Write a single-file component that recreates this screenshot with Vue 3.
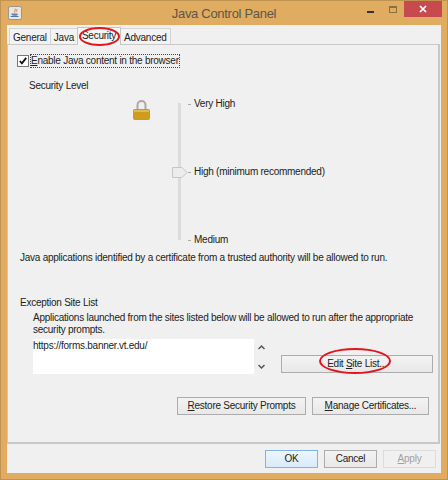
<template>
  <div class="window">
    <header class="titlebar">
      <svg class="app-icon" width="14" height="14" viewBox="0 0 16 16">
        <rect x="0.5" y="0.5" width="15" height="15" rx="2" fill="#e9e6e2" stroke="#8d8a86" />
        <path d="M8 3c1.500 1.500-1.500 2.500 0 4.500M10 3.500c.8 1-1 1.700 0 3" fill="none" stroke="#d9622b" stroke-width="1" />
        <path d="M4 8.500h7v1.500c0 1.500-6 1.500-7 0z" fill="#5b82b0" />
        <path d="M3 12h9" stroke="#4a76a8" stroke-width="1.200" />
      </svg>
      <span class="title">Java Control Panel</span>
      <div class="controls">
        <span class="minimize"></span>
        <span class="maximize"></span>
        <span class="close">
          <svg width="8" height="8" viewBox="0 0 8 8"><path d="M1 1l6 6M7 1l-6 6" stroke="#fff" stroke-width="1.700" /></svg>
        </span>
      </div>
    </header>

    <main class="client">
      <nav class="tabs">
        <span v-for="tab in tabs" :key="tab" class="tab" :class="{ active: tab === 'Security' }">{{ tab }}</span>
      </nav>

      <section class="panel">
        <label class="enable">
          <span class="checkbox">
            <svg width="10" height="10" viewBox="0 0 11 11"><path d="M2 5.500l2.300 2.500L9 2" fill="none" stroke="#111" stroke-width="2" /></svg>
          </span>
          <span class="focus-box"><u>E</u>nable Java content in the browser</span>
        </label>

        <div class="level-title">Security Level</div>

        <div class="level">
          <svg class="lock" width="17" height="20" viewBox="0 0 17 20">
            <path d="M4.500 10V5a4 4 0 0 1 8 0V10" fill="none" stroke="#a9a9a5" stroke-width="2" />
            <rect x="0.500" y="9.500" width="16" height="10" rx="1" fill="#cf9d1c" stroke="#b8975a" />
            <rect x="1" y="10" width="15" height="2" fill="#e0b957" />
          </svg>
          <div class="slider">
            <span class="track"></span>
            <svg class="thumb" width="16" height="11" viewBox="0 0 16 11">
              <path d="M.5 .5H10L15 5.500 10 10.500H.5z" fill="#ececec" stroke="#c6c6c6" />
            </svg>
          </div>
          <ul class="ticks">
            <li v-for="level in levels" :key="level"><span class="dash"></span>{{ level }}</li>
          </ul>
        </div>

        <p class="trusted">Java applications identified by a certificate from a trusted authority will be allowed to run.</p>

        <div class="exception-title">Exception Site List</div>
        <p class="exception-text">Applications launched from the sites listed below will be allowed to run after the appropriate security prompts.</p>

        <div class="site-row">
          <div class="site-list">https://forms.banner.vt.edu/</div>
          <div class="scroller">
            <svg width="7" height="6" viewBox="0 0 7 6"><path d="M.5 5L3.500 2 6.500 5" fill="none" stroke="#555" stroke-width="1.500" /></svg>
            <svg width="7" height="6" viewBox="0 0 7 6"><path d="M.5 1L3.500 4 6.500 1" fill="none" stroke="#555" stroke-width="1.500" /></svg>
          </div>
          <button class="btn edit">Edit <u>S</u>ite List...</button>
        </div>

        <div class="prompt-row">
          <button class="btn restore"><u>R</u>estore Security Prompts</button>
          <button class="btn manage"><u>M</u>anage Certificates...</button>
        </div>
      </section>

      <footer class="actions">
        <button class="btn action ok">OK</button>
        <button class="btn action">Cancel</button>
        <button class="btn action disabled"><u>A</u>pply</button>
      </footer>
    </main>

    <span class="ring ring-tab"></span>
    <span class="ring ring-edit"></span>
  </div>
</template>

<script setup>
const tabs = ['General', 'Java', 'Security', 'Advanced']
const levels = ['Very High', 'High (minimum recommended)', 'Medium']
</script>

<style>
html, body {
  margin: 0;
  background: #dcab61;
}
</style>

<style scoped>
.window {
  position: relative;
  width: 448px;
  height: 480px;
  box-sizing: border-box;
  display: flex;
  flex-direction: column;
  background: #dfac62;
  border: 1px solid #c09450;
  font-family: "Liberation Sans", Arial, sans-serif;
  font-size: 10px;
  letter-spacing: -0.25px;
  line-height: 14px;
  color: #222;
  overflow: hidden;
}

.titlebar {
  position: relative;
  height: 24px;
  flex: none;
  display: flex;
  align-items: center;
  justify-content: center;
}

.app-icon {
  position: absolute;
  left: 7px;
  top: 5px;
}

.title {
  font-size: 13px;
  letter-spacing: -0.3px;
  color: #5d5546;
  margin-top: 2px;
}

.controls {
  position: absolute;
  right: 5px;
  top: 0;
  display: flex;
  align-items: flex-start;
}

.minimize {
  width: 7px;
  height: 2px;
  background: #333;
  margin: 10px 15px 0 0;
}

.maximize {
  width: 6px;
  height: 4px;
  border: 1px solid #8a6f3f;
  border-top-width: 2px;
  margin: 5px 7px 0 0;
}

.close {
  width: 38px;
  height: 16px;
  background: #c74a4e;
  display: flex;
  align-items: center;
  justify-content: center;
}

.client {
  flex: none;
  margin: 0 6px;
  height: 448px;
  background: #f0f0f0;
  display: flex;
  flex-direction: column;
}

.tabs {
  display: flex;
  align-items: flex-end;
  height: 19px;
  padding-left: 2px;
  flex: none;
}

.tab {
  height: 16px;
  padding: 0 3px;
  line-height: 17px;
  border: 1px solid #d4d4d4;
  border-bottom: none;
  margin-right: -1px;
  background: #f3f3f3;
  box-sizing: border-box;
}

.tab.active {
  height: 18px;
  line-height: 15px;
  padding: 0 4px;
  background: #f6f6f6;
  border-color: #c4c4c4;
  position: relative;
  margin-bottom: -1px;
}

.panel {
  height: 400px;
  flex: none;
  box-sizing: border-box;
  border: 1px solid #c8c8c8;
  border-width: 1px 2px 2px 1px;
  width: 433px;
  padding: 9px 9px 0 9px;
  background: #f0f0f0;
}

.enable {
  display: flex;
  align-items: center;
  height: 14px;
}

.checkbox {
  width: 10px;
  height: 10px;
  border: 1px solid #777;
  background: #fff;
  display: flex;
  margin-right: 1px;
}

.focus-box {
  border: 1px dotted #444;
  line-height: 12px;
}

.level-title {
  margin: 11px 0 0 12px;
}

.level {
  display: flex;
  margin-top: 3px;
  height: 150px;
}

.lock {
  margin: 4px 0 0 116px;
}

.slider {
  position: relative;
  width: 16px;
  margin-left: 22px;
  height: 150px;
}

.track {
  display: block;
  width: 3px;
  height: 137px;
  margin: 7px 0 0 6px;
  background: #dcdcdc;
}

.thumb {
  position: absolute;
  left: 0;
  top: 71px;
}

.ticks {
  list-style: none;
  margin: 1px 0 0;
  padding: 0;
  height: 150px;
  display: flex;
  flex-direction: column;
  justify-content: space-between;
}

.ticks li {
  display: flex;
  align-items: center;
}

.dash {
  width: 3px;
  height: 1px;
  background: #aaa;
  margin-right: 3px;
}

.trusted {
  margin: 5px 0 0 3px;
}

.exception-title {
  margin: 31px 0 0 3px;
}

.exception-text {
  margin: 2px 0 0 16px;
  width: 395px;
  line-height: 12px;
}

.site-row {
  display: flex;
  margin: 3px -4px 0 16px;
  height: 36px;
}

.site-list {
  width: 221px;
  height: 35px;
  background: #fff;
  line-height: 13px;
}

.scroller {
  width: 7px;
  margin-left: 4px;
  padding: 5px 0;
  box-sizing: border-box;
  display: flex;
  flex-direction: column;
  justify-content: space-between;
}

.btn {
  font: inherit;
  letter-spacing: inherit;
  color: #222;
  background: linear-gradient(#f3f3f3, #e8e8e8);
  border: 1px solid #acacac;
  padding: 0;
  height: 18px;
  line-height: 14px;
}

.edit {
  width: 152px;
  margin: 16px 0 0 16px;
}

.prompt-row {
  display: flex;
  justify-content: flex-end;
  gap: 6px;
  margin-top: 22px;
}

.restore {
  width: 129px;
}

.manage {
  width: 117px;
}

.actions {
  display: flex;
  justify-content: flex-end;
  gap: 6px;
  padding: 6px 5px 0 0;
}

.action {
  width: 53px;
  height: 18px;
}

.ok {
  background: linear-gradient(#eef6fd, #d8eafa);
  border-color: #7eb4ea;
}

.disabled {
  color: #a0a0a0;
  background: #f0f0f0;
  border-color: #dcdcdc;
}

.ring {
  position: absolute;
  border: 2px solid #e4141c;
  border-radius: 50%;
  box-sizing: border-box;
}

.ring-tab {
  left: 78px;
  top: 26px;
  width: 41px;
  height: 19px;
}

.ring-edit {
  left: 318px;
  top: 347px;
  width: 72px;
  height: 26px;
}
</style>
